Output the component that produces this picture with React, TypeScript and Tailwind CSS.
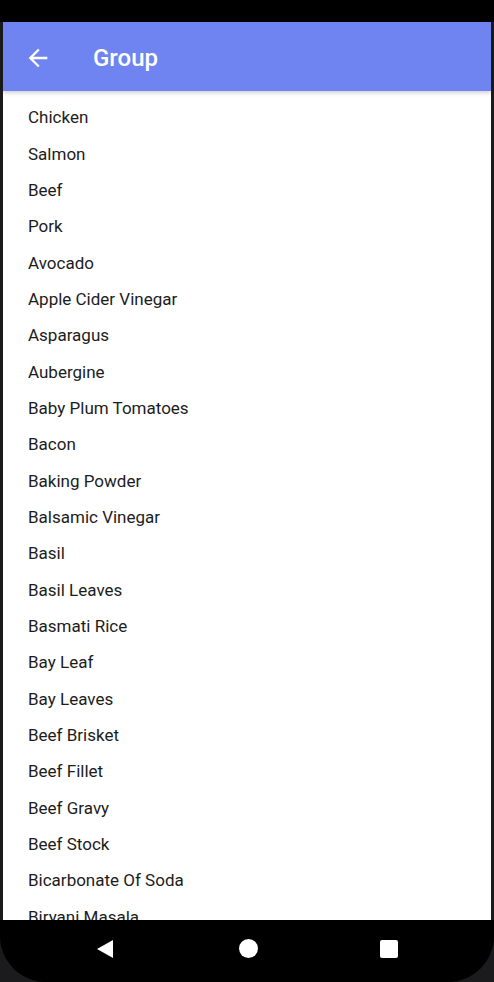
import React from "react";

const items = [
  "Chicken",
  "Salmon",
  "Beef",
  "Pork",
  "Avocado",
  "Apple Cider Vinegar",
  "Asparagus",
  "Aubergine",
  "Baby Plum Tomatoes",
  "Bacon",
  "Baking Powder",
  "Balsamic Vinegar",
  "Basil",
  "Basil Leaves",
  "Basmati Rice",
  "Bay Leaf",
  "Bay Leaves",
  "Beef Brisket",
  "Beef Fillet",
  "Beef Gravy",
  "Beef Stock",
  "Bicarbonate Of Soda",
  "Biryani Masala",
];

export default function App() {
  return (
    <div
      className="w-[494px] h-[982px] bg-[#1b1b1e] flex flex-col overflow-hidden"
      style={{ fontFamily: "Roboto, 'Liberation Sans', sans-serif" }}
    >
      {/* status bar */}
      <div className="h-[22px] bg-black shrink-0" />

      <div className="flex-1 flex min-h-0 pl-[3px] pr-[3px]">
        <div className="flex-1 flex flex-col bg-white min-h-0">
          <header className="h-[69px] bg-[#6f84f0] flex items-center shrink-0 relative z-10 shadow-[0_2px_4px_rgba(0,0,0,0.18)]">
            <svg
              className="ml-[21px] mt-[2px]"
              width="28"
              height="28"
              viewBox="0 0 24 24"
              fill="white"
            >
              <path d="M20 11H7.83l5.59-5.59L12 4l-8 8 8 8 1.41-1.41L7.83 13H20v-2z" />
            </svg>
            <h1 className="ml-[41px] mt-[3px] text-white text-[24px] font-medium">
              Group
            </h1>
          </header>

          <ul className="flex-1 overflow-hidden pt-[9px]">
            {items.map((name) => (
              <li
                key={name}
                className="h-[36.33px] flex items-center pl-[25px] text-[17px] text-[#1c1c1c]"
              >
                {name}
              </li>
            ))}
          </ul>
        </div>
      </div>

      {/* nav bar */}
      <div className="h-[62px] bg-black shrink-0 rounded-b-[46px] flex items-center pb-[5px] pl-[85px]">
        <div className="w-[40px] flex justify-center">
          <div className="w-0 h-0 border-t-[9px] border-b-[9px] border-r-[16px] border-t-transparent border-b-transparent border-r-white" />
        </div>
        <div className="w-[40px] flex justify-center ml-[103px]">
          <div className="w-[19px] h-[19px] rounded-full bg-white" />
        </div>
        <div className="w-[40px] flex justify-center ml-[101px]">
          <div className="w-[18px] h-[18px] rounded-[2px] bg-white" />
        </div>
      </div>
    </div>
  );
}
